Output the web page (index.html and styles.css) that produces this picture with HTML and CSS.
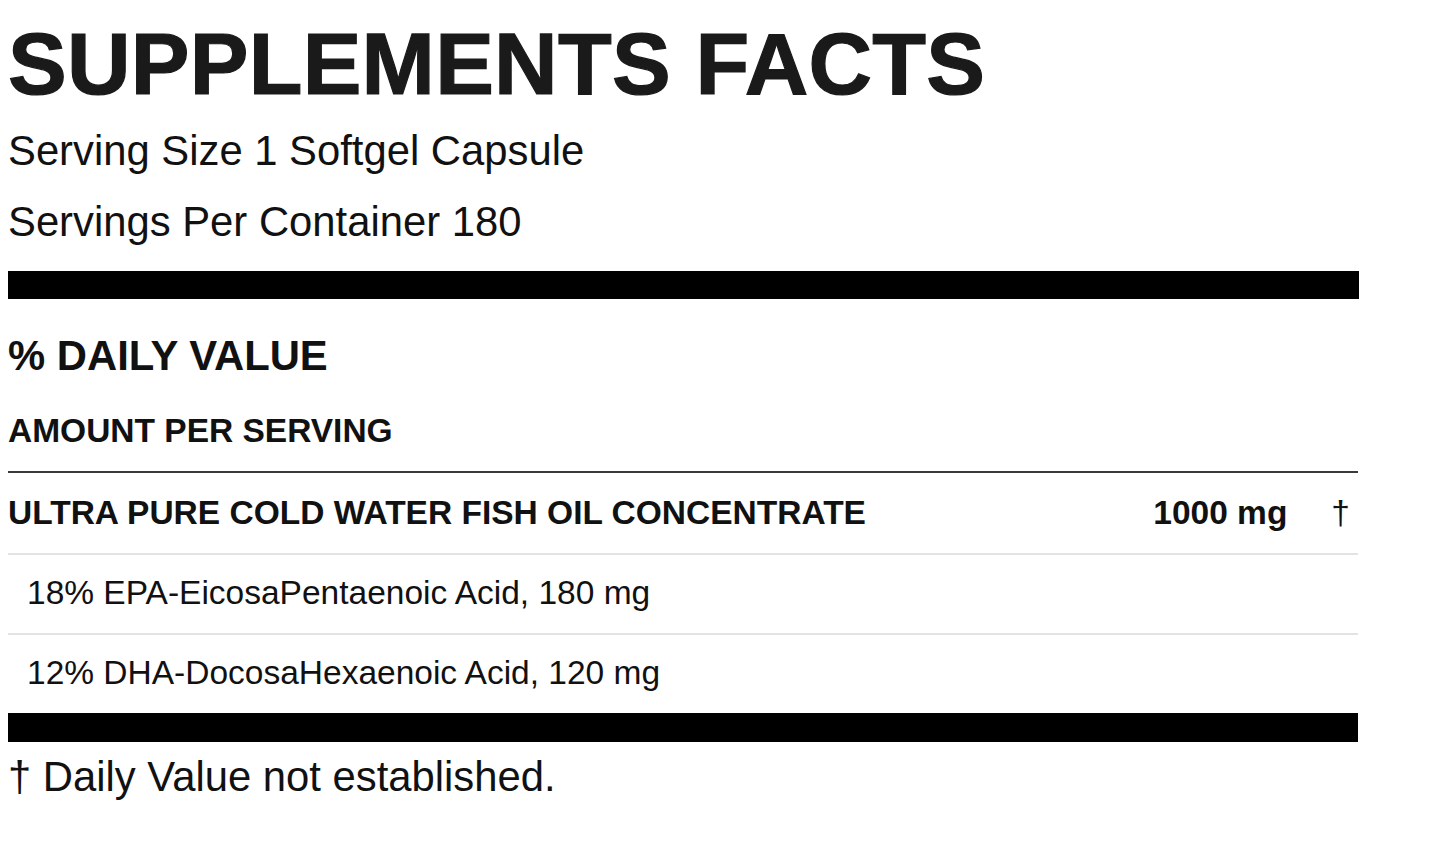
FILE: index.html
```html
<!DOCTYPE html>
<html lang="en">
<head>
<meta charset="utf-8">
<title>Supplements Facts</title>
<link rel="stylesheet" href="styles.css">
</head>
<body>
<div class="label">
  <h1 class="title">SUPPLEMENTS FACTS</h1>
  <p class="meta meta-first">Serving Size 1 Softgel Capsule</p>
  <p class="meta">Servings Per Container 180</p>
  <div class="bar bar-top"></div>
  <h2 class="dv">% DAILY VALUE</h2>
  <h3 class="aps">AMOUNT PER SERVING</h3>
  <div class="rows">
    <div class="row row-main">
      <span class="name">ULTRA PURE COLD WATER FISH OIL CONCENTRATE</span>
      <span class="amount">1000 mg</span>
      <span class="dagger">†</span>
    </div>
    <div class="row row-sub">
      <span class="name">18% EPA-EicosaPentaenoic Acid, 180 mg</span>
    </div>
    <div class="row row-sub">
      <span class="name">12% DHA-DocosaHexaenoic Acid, 120 mg</span>
    </div>
  </div>
  <div class="bar bar-bottom"></div>
  <p class="note">† Daily Value not established.</p>
</div>
</body>
</html>
```
FILE: styles.css
```css
html, body {
  margin: 0;
  padding: 0;
  background: #ffffff;
}

body {
  font-family: "Liberation Sans", Arial, sans-serif;
  color: #111111;
}

.label {
  width: 1350px;
  margin-left: 8px;
  padding-top: 20px;
}

.title {
  margin: 0;
  font-size: 88px;
  line-height: 88px;
  font-weight: 700;
  color: #1a1a1a;
  letter-spacing: 0.25px;
  -webkit-text-stroke: 1.2px #1a1a1a;
}

.meta {
  margin: 21px 0 0;
  font-size: 41.8px;
  line-height: 50px;
  font-weight: 400;
}

.meta-first {
  margin-top: 18px;
}

.bar {
  height: 28px;
  background: #000000;
}

.bar-top {
  margin-top: 24px;
  width: 1351px;
}

.bar-bottom {
  height: 29px;
}

.dv {
  margin: 33px 0 0;
  font-size: 41.8px;
  line-height: 48px;
  font-weight: 700;
}

.aps {
  margin: 32px 0 0;
  font-size: 33.5px;
  line-height: 38px;
  font-weight: 700;
  padding-bottom: 21px;
}

.row {
  display: flex;
  align-items: baseline;
  border-top: 2px solid #e3e3e3;
  padding: 19px 0 21px;
  font-size: 33.5px;
  line-height: 38px;
}

.row-main {
  border-top-color: #3a3a3a;
  font-weight: 700;
  padding-top: 21px;
  padding-bottom: 21px;
}

.row .name {
  flex: 1;
}

.row-sub .name {
  padding-left: 19px;
  font-weight: 400;
}

.amount {
  font-weight: 700;
}

.dagger {
  font-weight: 400;
  margin-left: 44px;
  padding-right: 8px;
}

.note {
  margin: 10px 0 0;
  font-size: 41.8px;
  line-height: 50px;
}
```
